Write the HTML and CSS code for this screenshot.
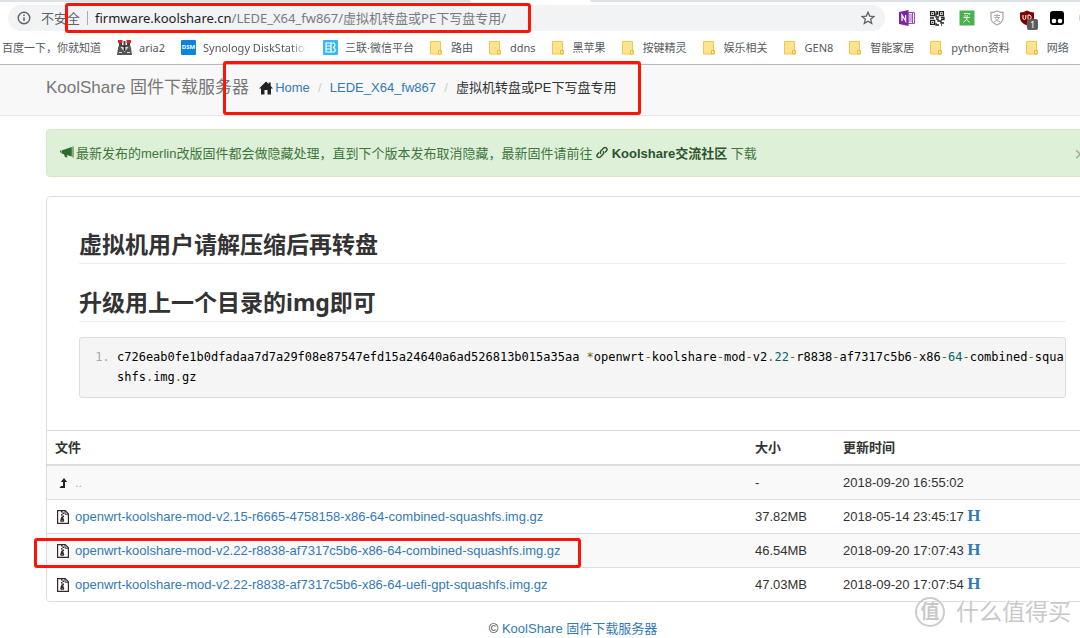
FILE: index.html
```html
<!DOCTYPE html>
<html lang="zh-CN">
<head>
<meta charset="utf-8">
<title>KoolShare 固件下载服务器</title>
<link rel="stylesheet" href="styles.css">
</head>
<body>
<svg class="defs" aria-hidden="true">
  <symbol id="folder" viewBox="0 0 12 14"><path d="M.5.5h10v9h1v3.500h-11z" fill="#ffe391" stroke="#eec84b"/><path d="M8.500 13V9.500h2.500V13z" fill="#fff0b8" stroke="#e6b93a"/></symbol>
  <symbol id="zip" viewBox="0 0 12 14"><path d="M.6.6h7.600l3.200 3.200v9.600H.6z" fill="#fff" stroke="#33292f" stroke-width="1.200"/><path d="M8 .8v3.400h3.200" fill="none" stroke="#33292f"/><path d="M4 1h1.500v1.500H4zM5.500 2.500H7V4H5.500zM4 4h1.500v1.500H4zM5.500 5.500H7V7H5.500z" fill="#33292f"/><path d="M4.400 6.500h1.600l1.200 4q0 1.800-2 1.800T3.200 10.500z" fill="#33292f"/><path d="M4.400 11h1.600" stroke="#fff" stroke-width=".6"/></symbol>
</svg>
<div class="page">
  <header class="browser">
    <div class="tabs"><span class="tab-left"></span><span class="tab-right"></span></div>
    <div class="toolbar">
      <div class="omnibox">
        <svg class="info" viewBox="0 0 14 14"><circle cx="7" cy="7" r="5.800" fill="none" stroke="#5f6368" stroke-width="1.400"/><path d="M7 6.200V10M7 3.600V5" stroke="#5f6368" stroke-width="1.500"/></svg>
        <span class="insecure">不安全</span>
        <span class="divider"></span>
        <span class="url"><b>firmware.koolshare.cn</b>/LEDE_X64_fw867/虚拟机转盘或PE下写盘专用/</span>
        <button class="star" aria-label="收藏"><svg viewBox="0 0 14 14"><path d="M7 1.200l1.700 3.900 4.200.4-3.200 2.800 1 4.100L7 10.200l-3.700 2.200 1-4.100L1.100 5.500l4.200-.4z" fill="none" stroke="#5f6368" stroke-width="1.300"/></svg></button>
      </div>
      <div class="extensions">
        <svg viewBox="0 0 16 16"><path d="M9 2.500h6.500v11H9z" fill="#fff" stroke="#9c4cc0"/><path d="M10 5h3M10 7h3M10 9h3M10 11h3M13.500 3v10" stroke="#9c4cc0"/><path d="M0 2l9.500-2v16L0 14z" fill="#7b24a5"/><path d="M3 11V5l3.600 6V5" fill="none" stroke="#fff" stroke-width="1.300"/></svg>
        <svg viewBox="0 0 16 16"><g fill="none" stroke="#222" stroke-width="1.300"><path d="M1.600 1.600h4v4h-4zM10.400 1.600h4v4h-4zM1.600 10.400h4v4h-4z"/><path d="M7 2h1.500v2H7v3h3M1 8h4M12 7.500h3v2h-3M7 9h2v2h3v2h3M7 13v2h3M12 15h1" /></g><path d="M3 3h1.300v1.300H3zM11.800 3h1.300v1.300h-1.300zM3 11.800h1.300v1.300H3z" fill="#222"/></svg>
        <svg viewBox="0 0 16 16"><path d="M.5.500h15v15H.5z" fill="#4caf50"/><path d="M5 3.500h6L9.800 5M5.500 5l1.500 1.200M4.500 7.500h6.500M8.400 5q.6 4.500-4 7.500M7.500 9l3 3.500M5 6.800l1.800 1" fill="none" stroke="#e5f5e5"/></svg>
        <svg viewBox="0 0 16 16"><path d="M8 1q3 1.500 6 1.500V8q0 4.500-6 7-6-2.500-6-7V2.500Q5 2.500 8 1z" fill="#fff" stroke="#aaa" stroke-width="1.300"/><path d="M5 5.500h6M8 4v3.300M5.500 7.500h4.800Q9 10.500 5 12M6 8.500q2 2.500 5 3.200" fill="none" stroke="#aaa"/></svg>
        <span class="blocker"><svg viewBox="0 0 16 16"><path d="M8 .5q3.500 2 7 2V8q0 5-7 7.500Q1 13 1 8V2.500q3.500 0 7-2z" fill="#800000"/><path d="M4 5v3q0 1.500 1.300 1.500T6.800 8V5M9 5v4.500h1q2.200 0 2.200-2.200T10 5z" fill="none" stroke="#fff"/></svg><span class="count">1</span></span>
        <svg viewBox="0 0 16 16"><rect x="1" y="1" width="14" height="14" rx="3"/><circle cx="5" cy="11" r="2.300" fill="#fff"/><circle cx="11" cy="11" r="2.300" fill="#fff"/></svg>
      </div>
      <span class="avatar"></span>
    </div>
    <nav class="bookmarks" aria-label="书签">
      <a href="#">百度一下，你就知道</a>
      <a href="#"><svg class="fav" viewBox="0 0 15 15"><path d="M2 5h11l1 3 1 7H0l1-7z" fill="#555"/><path d="M1 0h4.500v3H1zM9.500 0H14v3H9.500z" fill="#d9231c"/><path d="M2 3h3v3H2zM10 3h3v3h-3zM6.500 1h2v7h-2z" fill="#444"/><path d="M3.500 7h8L7.500 12z" fill="#ddd"/><path d="M6.700 6h1.600v5H6.700z" fill="#222"/><path d="M2 12.500h3M10 12.500h3" stroke="#ddd"/></svg>aria2</a>
      <a href="#"><span class="fav dsm">DSM</span><span class="faded">Synology DiskStation</span></a>
      <a href="#"><svg class="fav" viewBox="0 0 15 15"><rect width="15" height="15" rx="1" fill="#35b7fb"/><path d="M3 3h5v9H3zM3 6h5M3 9h5M8 3h2.500q1.500 0 1.500 2t-2 2.500q2.200.5 2.200 2.500T10.500 12H8" fill="none" stroke="#fff" stroke-width="1.200"/></svg>三联·微信平台</a>
      <a href="#"><svg class="folder"><use href="#folder"/></svg>路由</a>
      <a href="#"><svg class="folder"><use href="#folder"/></svg>ddns</a>
      <a href="#"><svg class="folder"><use href="#folder"/></svg>黑苹果</a>
      <a href="#"><svg class="folder"><use href="#folder"/></svg>按键精灵</a>
      <a href="#"><svg class="folder"><use href="#folder"/></svg>娱乐相关</a>
      <a href="#"><svg class="folder"><use href="#folder"/></svg>GEN8</a>
      <a href="#"><svg class="folder"><use href="#folder"/></svg>智能家居</a>
      <a href="#"><svg class="folder"><use href="#folder"/></svg>python资料</a>
      <a href="#"><svg class="folder"><use href="#folder"/></svg>网络</a>
    </nav>
  </header>

  <div class="navbar">
    <a class="brand" href="#">KoolShare 固件下载服务器</a>
    <nav class="crumbs" aria-label="路径">
      <a href="#"><svg class="home" viewBox="0 0 14 14"><path d="M7 .5l2.700 2.600V1.500h2v3.600L14 7.500h-2V13.500H8.500V9h-3v4.500H2V7.500H0z" fill="#222"/></svg>Home</a>
      <span class="sep">/</span>
      <a href="#">LEDE_X64_fw867</a>
      <span class="sep">/</span>
      <span>虚拟机转盘或PE下写盘专用</span>
    </nav>
  </div>

  <main class="container">
    <div class="alert">
      <p class="notice"><svg class="horn" viewBox="0 0 14 12"><path d="M12.500.5h1v11h-1zM1.500 4.500L11.800 1v9.500L6.800 9l.7 2.200H5L4 8.200 1.500 7.500zM0 4.500h1v2H0z" fill="#2d6a2f"/></svg>最新发布的merlin改版固件都会做隐藏处理，直到下个版本发布取消隐藏，最新固件请前往 <a href="#"><svg class="link" viewBox="0 0 12 13"><path d="M5 7.800Q3.600 6.300 5 4.800L7.700 2Q9 .8 10.400 2t.1 2.800L9 6.500M7 5.200q1.400 1.500 0 3L4.300 11Q3 12.200 1.600 11t-.1-2.800L3 6.500" fill="none" stroke="#2b542c" stroke-width="1.400"/></svg> Koolshare交流社区</a> 下载</p>
      <button class="close" aria-label="关闭">×</button>
    </div>

    <section class="panel">
      <div class="readme">
        <h2>虚拟机用户请解压缩后再转盘</h2>
        <h2>升级用上一个目录的img即可</h2>
        <ol class="code">
          <li><code>c726eab0fe1b0dfadaa7d7a29f08e87547efd15a24640a6ad526813b015a35aa <i>*</i>openwrt<i>-</i>koolshare<i>-</i>mod<i>-</i>v2<i>.</i><em>22</em><i>-</i>r8838<i>-</i>af7317c5b6<i>-</i>x86<i>-</i><em>64</em><i>-</i>combined<i>-</i>squashfs<i>.</i>img<i>.</i>gz</code></li>
        </ol>
      </div>
      <table class="files">
        <thead><tr><th class="name">文件</th><th class="size">大小</th><th>更新时间</th></tr></thead>
        <tbody>
          <tr><td><a class="up" href="#"><svg class="ficon" viewBox="0 0 12 14"><path d="M7 2l3.200 4H8v6H2.500l1.500-2h2V6H3.800z" fill="#222"/></svg>..</a></td><td>-</td><td>2018-09-20 16:55:02</td></tr>
          <tr><td><a href="#"><svg class="ficon"><use href="#zip"/></svg>openwrt-koolshare-mod-v2.15-r6665-4758158-x86-64-combined-squashfs.img.gz</a></td><td>37.82MB</td><td>2018-05-14 23:45:17 <a class="hash" href="#">H</a></td></tr>
          <tr><td><a href="#"><svg class="ficon"><use href="#zip"/></svg>openwrt-koolshare-mod-v2.22-r8838-af7317c5b6-x86-64-combined-squashfs.img.gz</a></td><td>46.54MB</td><td>2018-09-20 17:07:43 <a class="hash" href="#">H</a></td></tr>
          <tr><td><a href="#"><svg class="ficon"><use href="#zip"/></svg>openwrt-koolshare-mod-v2.22-r8838-af7317c5b6-x86-64-uefi-gpt-squashfs.img.gz</a></td><td>47.03MB</td><td>2018-09-20 17:07:54 <a class="hash" href="#">H</a></td></tr>
        </tbody>
      </table>
    </section>
  </main>
  <footer class="footer">© <a href="#">KoolShare 固件下载服务器</a></footer>

  <span class="mark mark-url"></span>
  <span class="mark mark-path"></span>
  <span class="mark mark-file"></span>
  <div class="watermark"><span class="seal">值</span>什么值得买</div>
</div>
</body>
</html>
```
FILE: styles.css
```css
* { box-sizing: border-box; }
body {
  margin: 0;
  background: #fff;
  color: #333;
  font: 13px/18px "Liberation Sans", "Noto Sans CJK SC", sans-serif;
}
a { color: #337ab7; text-decoration: none; }
button { border: 0; padding: 0; background: none; font: inherit; }
svg { flex: none; }
.defs { position: absolute; width: 0; height: 0; }
.page { position: relative; overflow: hidden; }

.browser { border-bottom: 1px solid #b9b9b9; font-family: "Noto Sans", "Noto Sans CJK SC", sans-serif; }
.tabs { display: flex; justify-content: space-between; height: 2px; }
.tab-left { width: 471px; background: #dee1e6; border-bottom-right-radius: 2px; }
.tab-right { flex: 0 1 490px; background: #dee1e6; border-bottom-left-radius: 2px; }
.toolbar { display: flex; align-items: center; padding: 3px 0 0 8px; }
.omnibox {
  display: flex; align-items: center; flex: 1; min-width: 0; height: 26px;
  padding: 0 10px 0 9px; border-radius: 13px; background: #f1f3f4; white-space: nowrap;
}
.info { width: 14px; height: 14px; margin-right: 10px; }
.insecure { color: #5f6368; }
.divider { width: 1px; height: 14px; margin: 0 7px; background: #a9acb0; }
.url { flex: 1; color: #777b80; }
.url b { font-weight: 400; color: #202124; }
.star, .star svg { display: block; width: 14px; height: 14px; }
.extensions { display: flex; gap: 14px; margin-left: 14px; }
.extensions svg { display: block; width: 16px; height: 16px; }
.blocker { position: relative; }
.count {
  position: absolute; left: 8px; top: 9px; width: 11px; height: 11px; border-radius: 2px;
  background: #5c5c5c; color: #fff; font-size: 9px; line-height: 11px; text-align: center;
}
.avatar { width: 16px; height: 16px; margin: 0 -15px 0 14px; border-radius: 50%; background: #ccc; }
.bookmarks { display: flex; gap: 16px; height: 33px; padding-left: 2px; align-items: center; font-size: 11px; white-space: nowrap; }
.bookmarks a { display: flex; align-items: center; color: #55595e; }
.fav { width: 15px; height: 15px; margin-right: 7px; }
.folder { width: 12px; height: 14px; margin-right: 9px; }
.dsm { background: #0a84e0; color: #fff; font-size: 6px; font-weight: 700; line-height: 14px; text-align: center; border-radius: 1px; }
.faded { width: 104px; overflow: hidden; mask-image: linear-gradient(90deg, #000 85%, transparent); }

.navbar { display: flex; align-items: center; height: 51px; padding: 0 46px 4px; background: #f8f8f8; border-bottom: 1px solid #e7e7e7; white-space: nowrap; }
.brand { color: #777; font-size: 17px; }
.crumbs { display: flex; align-items: center; margin-left: 10px; }
.crumbs a { display: flex; align-items: center; }
.home { width: 14px; height: 14px; margin-right: 2px; }
.sep { width: 20px; text-align: center; color: #ccc; }

.container { padding-left: 46px; margin: 13px -19px 0 0; }
.alert { display: flex; align-items: center; height: 48px; padding: 1px 12px 0 13px; border: 1px solid #d6e9c6; border-radius: 4px; background: #dff0d8; color: #3c763d; }
.notice { flex: 1; margin: 0; white-space: nowrap; }
.notice a { color: #2b542c; font-weight: 700; }
.horn { width: 14px; height: 12px; margin-right: 2px; }
.link { width: 12px; height: 13px; vertical-align: -1px; }
.close { font-size: 20px; color: #9fae99; }

.panel { margin-top: 19px; border: 1px solid #ddd; border-radius: 4px; }
.readme { padding: 32px; }
h2 { margin: 0 0 23px; padding-bottom: 4px; border-bottom: 1px solid #eee; font: 700 23px/30px "Noto Sans", "Noto Sans CJK SC", sans-serif; }
.code { margin: -8px 0 0; padding: 9px 0 10px 37px; border: 1px solid #ddd; border-radius: 3px; background: #f5f5f5; color: #aaa; font: 12px/20px "DejaVu Sans Mono", monospace; }
.code code { font: inherit; color: #000; word-break: break-all; }
.code i { font-style: normal; color: #660; }
.code em { font-style: normal; color: #066; }

.files { width: 100%; border-spacing: 0; table-layout: fixed; }
.files th, .files td { padding: 8px 8px 7px; border-top: 1px solid #ddd; text-align: left; vertical-align: top; white-space: nowrap; line-height: 18px; }
.files thead th { border-bottom: 2px solid #ddd; }
.files tbody tr:first-child td { border-top: 0; }
.files tbody tr:nth-child(odd) { background: #f9f9f9; }
.name { width: 700px; }
.size { width: 88px; }
.files td a { display: inline-flex; align-items: center; vertical-align: top; }
.ficon { width: 12px; height: 14px; margin: 0 6px 0 2px; }
.files .up { color: #9db8d0; }
.files td .hash { display: inline; vertical-align: baseline; font: 700 17px/14px "Liberation Serif", serif; }

.footer { padding: 19px 0 0 66px; line-height: 16px; text-align: center; }

.mark { position: absolute; border: 3px solid #fb1408; border-radius: 3px; }
.mark-url { left: 65px; top: 3px; width: 466px; height: 30px; }
.mark-path { left: 223px; top: 61px; width: 418px; height: 54px; }
.mark-file { left: 34px; top: 538px; width: 547px; height: 30px; }
.watermark {
  position: absolute; right: 9px; top: 597px; display: flex; align-items: center; gap: 11px;
  color: #c9c9c9; font-size: 23px; line-height: 30px; text-shadow: -1px -1px 0 #fff;
}
.seal { width: 30px; height: 30px; border: 2px solid #ccc; border-radius: 50%; font-size: 19px; font-weight: 700; line-height: 26px; text-align: center; }
```
